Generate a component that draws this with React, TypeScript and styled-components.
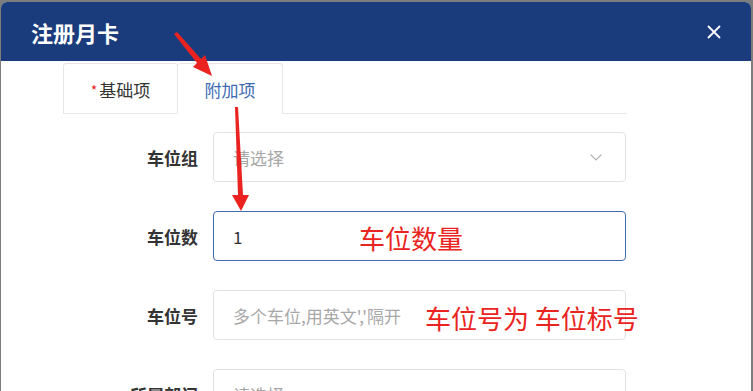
import styled, { createGlobalStyle } from "styled-components"

const GlobalStyle = createGlobalStyle`
    html, body {
        margin: 0;
        padding: 0;
        background: #7d7d7d;
        overflow: hidden;
    }

    body {
        font-family: "Noto Sans CJK SC", "Noto Sans", sans-serif;
    }
`

interface FieldProps {
    label: string
    value?: string
    placeholder?: string
    select?: boolean
    focused?: boolean
}

const fields: FieldProps[] = [
    { label: "车位组", placeholder: "请选择", select: true },
    { label: "车位数", value: "1", focused: true },
    { label: "车位号", placeholder: "多个车位,用英文','隔开" },
    { label: "所属部门", placeholder: "请选择", select: true },
]

const Chevron = () => (
    <svg width="14" height="14" viewBox="0 0 14 14" fill="none">
        <path d="M1.5 4.5 L7 10 L12.5 4.5" stroke="#b4b4b4" strokeWidth="1.2" />
    </svg>
)

const CloseIcon = () => (
    <svg width="16" height="16" viewBox="0 0 16 16" fill="none">
        <path d="M2 2 L14 14 M14 2 L2 14" stroke="#ffffff" strokeWidth="1.8" />
    </svg>
)

const Field = ({ label, value, placeholder, select, focused }: FieldProps) => (
    <Row>
        <Label>{label}</Label>
        <InputBox $focused={focused}>
            {value ? <Value>{value}</Value> : <Placeholder>{placeholder}</Placeholder>}
            {select && <Chevron />}
        </InputBox>
    </Row>
)

// red marks drawn on top of the screenshot
const Annotations = () => (
    <Overlay>
        <svg width="753" height="391" viewBox="0 0 753 391">
            <polygon points="174,34 177,32 201,59 205,55 212,76 193,67 197,63" fill="#ea2320" />
            <polygon points="235,107 238,107 243,195 249,195 241,211 232,195 238,195" fill="#ea2320" />
        </svg>
        <Note style={{ left: 359, top: 221 }}>车位数量</Note>
        <Note style={{ left: 425, top: 301 }}>车位号为 车位标号</Note>
    </Overlay>
)

export default function App() {
    return (
        <>
            <GlobalStyle />
            <Screen>
                <Modal>
                    <Header>
                        <Title>注册月卡</Title>
                        <CloseButton><CloseIcon /></CloseButton>
                    </Header>
                    <Body>
                        <Tabs>
                            <Tab>
                                <Required>*</Required>基础项
                            </Tab>
                            <Tab $active>附加项</Tab>
                            <TabFill />
                        </Tabs>
                        <Form>
                            {fields.map((f) => (
                                <Field key={f.label} {...f} />
                            ))}
                        </Form>
                    </Body>
                </Modal>
                <Annotations />
            </Screen>
        </>
    )
}

const Screen = styled.div`
    position: relative;
    width: 753px;
    height: 391px;
    overflow: hidden;
    padding: 2px 2px 0 1px;
    box-sizing: border-box;
`

const Modal = styled.div`
    width: 750px;
    height: 420px;
    background: #ffffff;
    border-radius: 6px 6px 0 0;
    overflow: hidden;
`

const Header = styled.header`
    height: 59px;
    background: #1b3c7c;
    display: flex;
    align-items: center;
    justify-content: space-between;
    padding: 0 29px 0 30px;
`

const Title = styled.h1`
    margin: 0;
    color: #ffffff;
    font-size: 22px;
    font-weight: 700;
`

const CloseButton = styled.button`
    border: none;
    background: none;
    padding: 0;
    display: flex;
    cursor: pointer;
`

const Body = styled.section`
    padding: 2px 0 0 62px;
`

const Tabs = styled.div`
    display: flex;
    width: 563px;
    height: 51px;
`

const Tab = styled.div<{ $active?: boolean }>`
    display: flex;
    align-items: center;
    justify-content: center;
    box-sizing: border-box;
    width: ${(p) => (p.$active ? 105 : 115)}px;
    padding-top: 2px;
    font-size: 17px;
    color: ${(p) => (p.$active ? "#3d6bb3" : "#333333")};
    border: 1px solid #e6e6e6;
    border-bottom-color: ${(p) => (p.$active ? "transparent" : "#e6e6e6")};
    border-left-width: ${(p) => (p.$active ? 0 : 1)}px;
    border-radius: 3px 3px 0 0;
    background: #ffffff;
`

const Required = styled.span`
    color: #e8231b;
    margin-right: 2px;
    font-size: 14px;
`

const TabFill = styled.div`
    flex: 1;
    border-bottom: 1px solid #e6e6e6;
`

const Form = styled.div`
    display: flex;
    flex-direction: column;
    gap: 29px;
    padding-top: 18px;
`

const Row = styled.div`
    display: flex;
    align-items: center;
    gap: 15px;
`

const Label = styled.label`
    width: 135px;
    text-align: right;
    font-size: 17px;
    font-weight: 700;
    color: #333333;
`

const InputBox = styled.div<{ $focused?: boolean }>`
    box-sizing: border-box;
    width: 413px;
    height: 50px;
    display: flex;
    align-items: center;
    justify-content: space-between;
    padding: 0 22px 0 19px;
    border: 1px solid ${(p) => (p.$focused ? "#3d6bb3" : "#e2e2e2")};
    border-radius: 4px;
    font-size: 17px;
`

const Placeholder = styled.span`
    color: #a8a8a8;
`

const Value = styled.span`
    color: #333333;
`

const Overlay = styled.div`
    position: absolute;
    inset: 0;
    pointer-events: none;

    svg {
        position: absolute;
        left: 0;
        top: 0;
    }
`

const Note = styled.div`
    position: absolute;
    color: #ea2320;
    font-size: 26px;
    line-height: 34px;
    white-space: nowrap;
`
